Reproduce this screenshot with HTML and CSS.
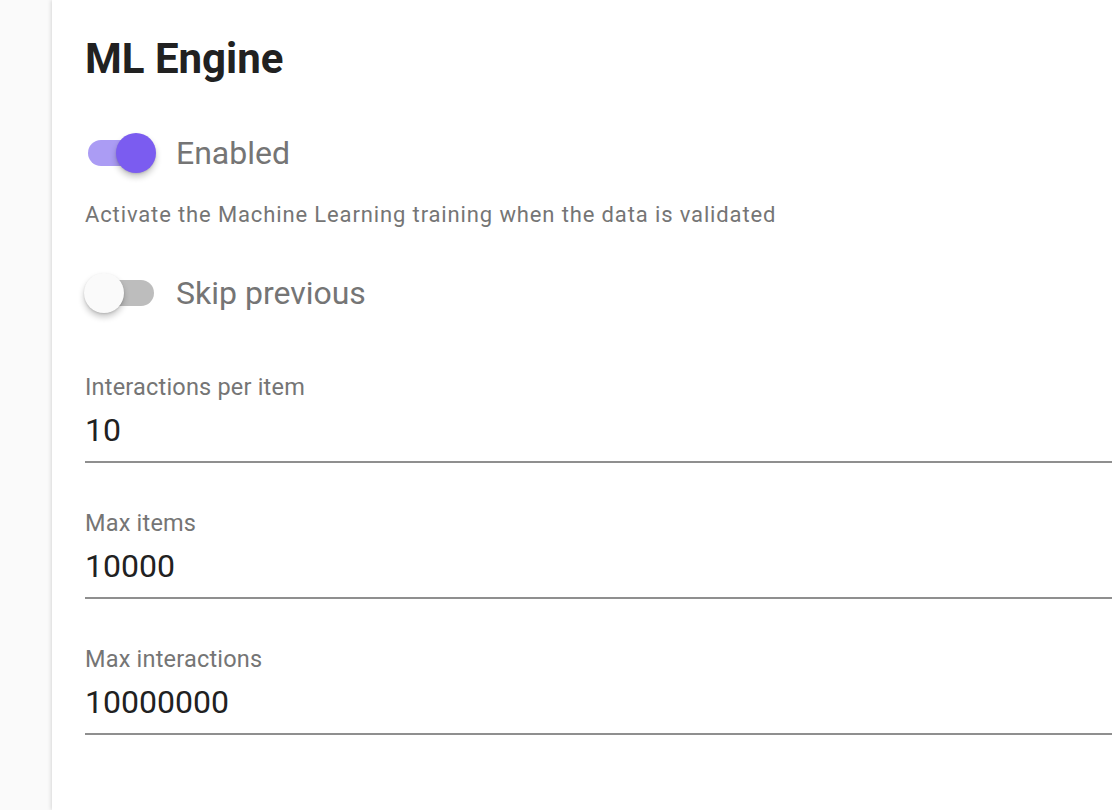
FILE: index.html
```html
<!DOCTYPE html>
<html lang="en">
<head>
<meta charset="utf-8">
<title>ML Engine</title>
<link rel="stylesheet" href="styles.css">
</head>
<body>
<div class="app">
  <aside class="sidebar"></aside>
  <main class="card">
    <h1 class="title">ML Engine</h1>

    <label class="switch-row switch-row--first">
      <span class="switch switch--on">
        <span class="switch-track"></span>
        <span class="switch-thumb"></span>
      </span>
      <span class="switch-label">Enabled</span>
    </label>
    <p class="helper">Activate the Machine Learning training when the data is validated</p>

    <label class="switch-row switch-row--second">
      <span class="switch">
        <span class="switch-track"></span>
        <span class="switch-thumb"></span>
      </span>
      <span class="switch-label">Skip previous</span>
    </label>

    <div class="field field--first">
      <div class="field-label">Interactions per item</div>
      <div class="field-value">10</div>
    </div>
    <div class="field">
      <div class="field-label">Max items</div>
      <div class="field-value">10000</div>
    </div>
    <div class="field">
      <div class="field-label">Max interactions</div>
      <div class="field-value">10000000</div>
    </div>
  </main>
</div>
</body>
</html>
```

FILE: styles.css
```css
* { box-sizing: border-box; }

html, body {
  margin: 0;
  padding: 0;
  height: 100%;
  overflow: hidden;
}

body {
  background: #fafafa;
  font-family: Roboto, "Liberation Sans", sans-serif;
}

.app {
  display: flex;
  min-height: 810px;
}

.sidebar {
  width: 52px;
  flex: 0 0 52px;
  background: #fafafa;
}

.card {
  flex: 1;
  background: #ffffff;
  box-shadow: -1px 0 4px rgba(0, 0, 0, 0.14);
  padding: 34px 0 0 33px;
  display: flex;
  flex-direction: column;
  min-height: 810px;
}

.title {
  margin: 0;
  font-size: 42px;
  line-height: 50px;
  font-weight: 700;
  color: #212121;
}

.switch-row {
  display: flex;
  align-items: center;
  height: 60px;
}

.switch-row--first { margin-top: 39px; }
.switch-row--second { margin-top: 35px; }

.switch {
  position: relative;
  width: 72px;
  height: 40px;
  margin-left: -1px;
  margin-right: 20px;
  flex: 0 0 72px;
}

.switch-track {
  position: absolute;
  left: 4px;
  top: 7px;
  width: 66px;
  height: 26px;
  border-radius: 13px;
  background: #bdbdbd;
}

.switch-thumb {
  position: absolute;
  left: 0;
  top: 0;
  width: 40px;
  height: 40px;
  border-radius: 50%;
  background: #fafafa;
  box-shadow: 0 4px 6px rgba(0, 0, 0, 0.22), 0 1px 2px rgba(0, 0, 0, 0.12);
}

.switch--on .switch-track { background: #ab9cf4; }
.switch--on .switch-thumb {
  left: 32px;
  background: #7b5cf0;
}

.switch-label {
  font-size: 32px;
  line-height: 38px;
  color: #757575;
}

.helper {
  margin: 19px 0 0;
  font-size: 22px;
  line-height: 26px;
  letter-spacing: 0.87px;
  color: #757575;
}

.field {
  margin-top: 46px;
  border-bottom: 2px solid #8f8f8f;
  padding-bottom: 12px;
}

.field--first { margin-top: 50px; }

.field-label {
  font-size: 23.5px;
  line-height: 28px;
  letter-spacing: 0.2px;
  color: #757575;
}

.field-value {
  margin-top: 10px;
  font-size: 32px;
  line-height: 38px;
  color: #212121;
}
```
